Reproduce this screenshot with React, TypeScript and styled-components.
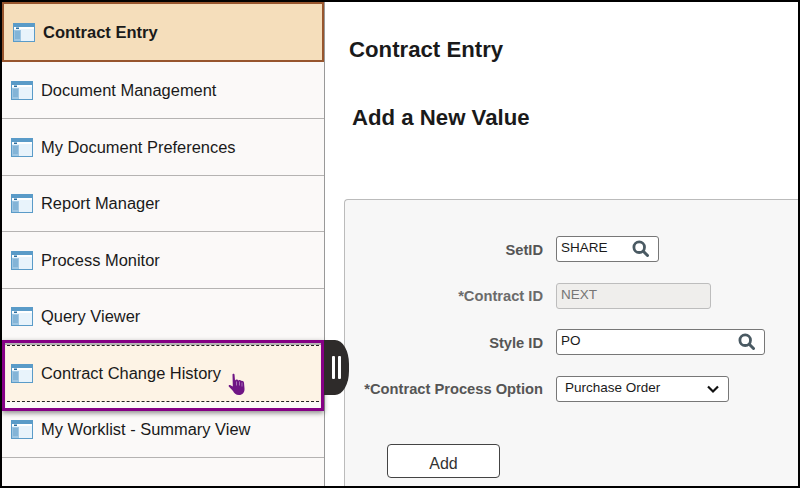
import React from 'react';
import styled, {createGlobalStyle} from "styled-components";

const GlobalStyle = createGlobalStyle`
  html, body {
    margin: 0;
    padding: 0;
    background: #fff;
  }
`
const Frame = styled.div`
  width: 800px;
  height: 488px;
  box-sizing: border-box;
  border: 2px solid #000;
  display: flex;
  overflow: hidden;
  font-family: "Liberation Sans", Arial, sans-serif;
  color: #1a1a1a;
`
const Sidebar = styled.div`
  width: 322px;
  flex-shrink: 0;
  background: #fbf9f8;
  border-right: 1px solid #999;
  position: relative;
`
const ActiveRow = styled.div`
  height: 60px;
  margin-bottom: 0.5px;
  box-sizing: border-box;
  border: 2px solid #97552d;
  background: #f5debb;
  display: flex;
  align-items: center;
  padding: 1px 0 0 9px;
  gap: 8px;
  font-size: 16.5px;
  font-weight: 700;
`
const Row = styled.div`
  height: 56.5px;
  box-sizing: border-box;
  border-bottom: 1px solid #b5b3b2;
  display: flex;
  align-items: center;
  padding: 1px 0 0 9px;
  gap: 8px;
  font-size: 16.45px;
`
const HoverRow = styled(Row)`
  position: relative;
  background: #fdf3e5;
  padding-top: 0;
  border-bottom: 1px dashed #222;
  border-top: 1px dashed #222;

  &::after {
    content: '';
    position: absolute;
    left: 0;
    right: 0;
    top: -6px;
    bottom: -10px;
    border: 3px solid #850085;
    box-shadow: 0 2px 5px rgba(0, 0, 0, 0.45), inset 0 1px 1px rgba(0, 0, 0, 0.3);
  }
`
const Pointer = styled.svg`
  position: absolute;
  left: 226px;
  top: 27px;
  width: 18px;
  height: 24px;
`
const Handle = styled.div`
  position: absolute;
  left: 322px;
  top: 338px;
  width: 25px;
  height: 55px;
  background: #2e2b2a;
  border-radius: 0 14px 14px 0 / 0 24px 24px 0;
  display: flex;
  justify-content: center;
  align-items: center;
  gap: 3px;
  padding-right: 1px;
  box-sizing: border-box;
  z-index: 2;

  &::before, &::after {
    content: '';
    width: 3px;
    height: 23px;
    border-radius: 1px;
    background: #fff;
  }
`
const Main = styled.div`
  flex: 1;
  min-width: 0;
  display: flex;
  flex-direction: column;
  padding: 36px 0 0 19px;
`
const PageTitle = styled.div`
  font-size: 22.2px;
  font-weight: 700;
  line-height: 24px;
  margin-left: 5px;
`
const SubTitle = styled.div`
  font-size: 22.2px;
  font-weight: 700;
  line-height: 24px;
  margin: 44px 0 0 8px;
`
const Panel = styled.div`
  margin-top: 69px;
  flex: 1;
  background: #f7f7f7;
  border: 1px solid #bbb;
  border-right: 0;
  border-bottom: 0;
  border-top-left-radius: 4px;
  padding: 36px 0 0 0;
  display: flex;
  flex-direction: column;
`
const Field = styled.div`
  display: flex;
  align-items: center;
  height: 26px;
  margin-bottom: 20.5px;
`
const Label = styled.div<{$muted?: boolean}>`
  width: 198px;
  text-align: right;
  font-size: 14.7px;
  font-weight: 700;
  color: ${props => props.$muted ? '#6b6b6b' : '#555'};
  margin-right: 13px;
  padding-top: 1px;
`
const InputBox = styled.div<{$width: number; $disabled?: boolean}>`
  width: ${props => props.$width}px;
  height: 26px;
  box-sizing: border-box;
  background: ${props => props.$disabled ? '#efeeec' : '#fff'};
  border: 1px solid ${props => props.$disabled ? '#bdbdbd' : '#777'};
  border-radius: 3px;
  display: flex;
  align-items: center;
  justify-content: space-between;
  padding: 0 9px 3px 4px;
  font-size: 13.5px;
  color: ${props => props.$disabled ? '#757575' : '#1a1a1a'};
`
const SelectBox = styled(InputBox)`
  padding: 0 8px 3px 8px;
  font-size: 13.5px;
`
const SearchIcon = styled.svg`
  width: 17px;
  height: 17px;
  margin-top: 1px;
`
const Chevron = styled.svg`
  width: 14px;
  height: 14px;
  margin-top: 3px;
`
const AddButton = styled.div`
  width: 113px;
  height: 34px;
  box-sizing: border-box;
  margin: 22px 0 0 42px;
  background: #fff;
  border: 1px solid #444;
  border-radius: 4px;
  display: flex;
  align-items: center;
  justify-content: center;
  font-size: 16px;
  color: #333;
  padding-top: 5px;
`
const IconSvg = styled.svg`
  width: 22px;
  height: 19px;
  flex-shrink: 0;
`

const WindowIcon = () => (
    <IconSvg viewBox="0 0 22 19">
        <rect x="0.5" y="0.5" width="21" height="18" fill="#e8f3fb" stroke="#5a9bc8"/>
        <rect x="1" y="1" width="20" height="3" fill="#5a9bc8"/>
        <rect x="1" y="4" width="20" height="2" fill="#fff"/>
        <rect x="3" y="4.5" width="3" height="1.5" fill="#2d6f9f"/>
        <rect x="1" y="7" width="7" height="11" fill="#9fc6e2"/>
        <path d="M2 9h5M2 11h5M2 13h5M2 15h5" stroke="#5a9bc8" strokeWidth="0.8"/>
    </IconSvg>
)

const Magnifier = () => (
    <SearchIcon viewBox="0 0 17 17">
        <circle cx="7.2" cy="7.2" r="5.3" fill="none" stroke="#4a5a63" strokeWidth="2.8"/>
        <path d="M11.3 11.3 15.5 15.5" stroke="#4a5a63" strokeWidth="3" strokeLinecap="round"/>
    </SearchIcon>
)

const items = [
    'Document Management',
    'My Document Preferences',
    'Report Manager',
    'Process Monitor',
    'Query Viewer',
]

const App = () => {
    return (
        <>
            <GlobalStyle/>
            <Frame>
                <Sidebar>
                    <ActiveRow>
                        <WindowIcon/>
                        Contract Entry
                    </ActiveRow>
                    {items.map(item => (
                        <Row key={item}>
                            <WindowIcon/>
                            {item}
                        </Row>
                    ))}
                    <HoverRow>
                        <WindowIcon/>
                        Contract Change History
                        <Pointer viewBox="0 0 18 24">
                            <path d="M4.500 1.500C4.500.5 6.500.5 6.500 1.500L7 7.500C8 6 9.800 6.500 10.200 7.500C11.200 6.500 12.800 7 13 8C14.200 7.500 15.800 8.200 16 9.800L16.500 15.500C16.800 19.500 14.500 22 11 22C7.800 22 6 20.200 5 18L.8 13.500C.3 12.500 1 11.800 2 12L4.800 13.500Z" fill="#6f1585"/>
                            <path d="M8.500 8.500v4M11.500 8.500v4M14 9.500v4" stroke="#b58bc4" strokeWidth="0.8"/>
                        </Pointer>
                    </HoverRow>
                    <Row>
                        <WindowIcon/>
                        My Worklist - Summary View
                    </Row>
                    <Handle/>
                </Sidebar>
                <Main>
                    <PageTitle>Contract Entry</PageTitle>
                    <SubTitle>Add a New Value</SubTitle>
                    <Panel>
                        <Field>
                            <Label>SetID</Label>
                            <InputBox $width={103}>SHARE<Magnifier/></InputBox>
                        </Field>
                        <Field>
                            <Label $muted>*Contract ID</Label>
                            <InputBox $width={155} $disabled>NEXT</InputBox>
                        </Field>
                        <Field>
                            <Label>Style ID</Label>
                            <InputBox $width={209}>PO<Magnifier/></InputBox>
                        </Field>
                        <Field>
                            <Label>*Contract Process Option</Label>
                            <SelectBox as="div" $width={173}>
                                Purchase Order
                                <Chevron viewBox="0 0 14 14">
                                    <path d="M2 4.500 7 9.500 12 4.500" fill="none" stroke="#111" strokeWidth="2.200"/>
                                </Chevron>
                            </SelectBox>
                        </Field>
                        <AddButton>Add</AddButton>
                    </Panel>
                </Main>
            </Frame>
        </>
    );
};

export default App;
